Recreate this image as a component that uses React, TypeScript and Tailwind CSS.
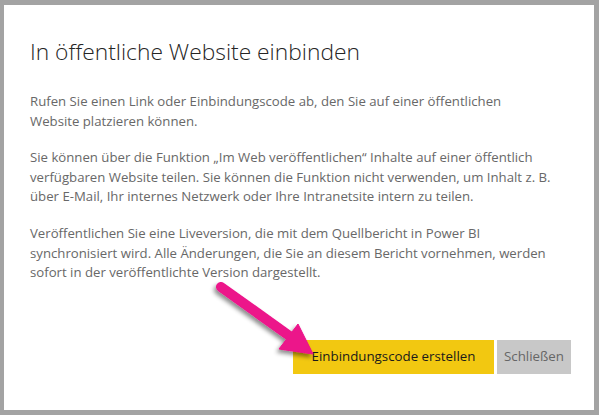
export default function App() {
  return (
    <div
      className="relative h-[415px] w-[599px] bg-[#a3a3a3] pb-[5px] pl-[4px] pr-[5px] pt-[5px]"
      style={{ fontFamily: '"Open Sans", "Noto Sans", sans-serif' }}
    >
      <div className="flex h-full flex-col bg-white pl-[26px] pr-[23px]">
        <h1 className="mt-[32px] whitespace-nowrap text-[22.8px] font-light leading-[30px] text-[#252525]">
          In öffentliche Website einbinden
        </h1>
        <div className="mt-[25px] flex flex-col gap-[17px] whitespace-nowrap text-[13.2px] leading-[19.6px] text-[#686868]">
          <p>
            Rufen Sie einen Link oder Einbindungscode ab, den Sie auf einer öffentlichen
            <br />
            Website platzieren können.
          </p>
          <p>
            Sie können über die Funktion „Im Web veröffentlichen“ Inhalte auf einer öffentlich
            <br />
            verfügbaren Website teilen. Sie können die Funktion nicht verwenden, um Inhalt z. B.
            <br />
            über E-Mail, Ihr internes Netzwerk oder Ihre Intranetsite intern zu teilen.
          </p>
          <p>
            Veröffentlichen Sie eine Liveversion, die mit dem Quellbericht in Power BI
            <br />
            synchronisiert wird. Alle Änderungen, die Sie an diesem Bericht vornehmen, werden
            <br />
            sofort in der veröffentlichte Version dargestellt.
          </p>
        </div>
        <div className="mt-auto mb-[36px] flex justify-end gap-[3px]">
          <button className="h-[34px] w-[201px] whitespace-nowrap bg-[#f2c811] text-[13.3px] text-[#1a1a1a]">
            Einbindungscode erstellen
          </button>
          <button className="h-[34px] w-[74px] whitespace-nowrap bg-[#c8c8c8] text-[13.3px] text-[#666666]">
            Schließen
          </button>
        </div>
      </div>

      <svg
        className="pointer-events-none absolute left-0 top-0"
        width="599"
        height="415"
        viewBox="0 0 599 415"
      >
        <defs>
          <filter id="sh" x="-20%" y="-20%" width="140%" height="140%">
            <feDropShadow dx="-2" dy="3" stdDeviation="2" floodColor="#000" floodOpacity="0.45" />
          </filter>
        </defs>
        <g filter="url(#sh)" fill="#ec138a" stroke="#ec138a">
          <line x1="221" y1="287" x2="291" y2="337" strokeWidth="10" strokeLinecap="round" />
          <polygon points="279,349 298,324 313,354" strokeWidth="1" strokeLinejoin="round" />
        </g>
      </svg>
    </div>
  );
}
